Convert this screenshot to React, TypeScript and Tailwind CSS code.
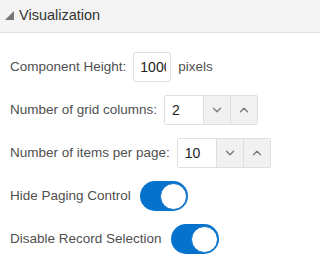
import { ChevronDown, ChevronUp } from "lucide-react";

function Spinner({ value }: { value: string }) {
  return (
    <div className="flex h-[30px] rounded-[2px] border border-[#dfdfdf]">
      <input
        readOnly
        value={value}
        className="h-full w-[38px] bg-white px-[7px] text-[14px] text-[#222] outline-none"
      />
      <button className="flex w-[27px] items-center justify-center border-l border-[#dfdfdf] bg-[#f1f1f1] text-[#777]">
        <ChevronDown size={14} strokeWidth={2.25} />
      </button>
      <button className="flex w-[27px] items-center justify-center border-l border-[#dfdfdf] bg-[#f1f1f1] text-[#777]">
        <ChevronUp size={14} strokeWidth={2.25} />
      </button>
    </div>
  );
}

function Toggle() {
  return (
    <div className="flex h-[30px] w-[48px] items-center justify-end rounded-full bg-[#0572ce] px-[1px]">
      <div className="h-[27px] w-[27px] rounded-full border border-[#0a6fc4] bg-white" />
    </div>
  );
}

export default function App() {
  return (
    <div
      className="h-[276px] w-[320px] bg-white text-[13.5px] text-[#4f4f4f]"
      style={{ fontFamily: '"Liberation Sans", Arial, sans-serif' }}
    >
      <div className="flex h-[33px] items-center gap-[5px] border-b border-[#e3e3e3] bg-[#f3f3f3] pl-[5px]">
        <svg width="9" height="9" viewBox="0 0 9 9" className="mb-[2px]">
          <polygon points="9,0 9,9 0,9" fill="#767676" />
        </svg>
        <span className="text-[14.5px] text-[#333]">Visualization</span>
      </div>

      <div className="flex flex-col gap-[13px] pl-[10px] pt-[19px]">
        <div className="flex items-center gap-[7px]">
          <span>Component Height:</span>
          <input
            readOnly
            value="1000"
            className="h-[30px] w-[38px] rounded-[2px] border border-[#dfdfdf] bg-white pl-[6px] pr-[4px] text-[14px] text-[#222] outline-none"
          />
          <span>pixels</span>
        </div>

        <div className="flex items-center gap-[7px]">
          <span>Number of grid columns:</span>
          <Spinner value="2" />
        </div>

        <div className="flex items-center gap-[7px]">
          <span>Number of items per page:</span>
          <Spinner value="10" />
        </div>

        <div className="flex items-center gap-[9px]">
          <span>Hide Paging Control</span>
          <Toggle />
        </div>

        <div className="flex items-center gap-[9px]">
          <span>Disable Record Selection</span>
          <Toggle />
        </div>
      </div>
    </div>
  );
}
